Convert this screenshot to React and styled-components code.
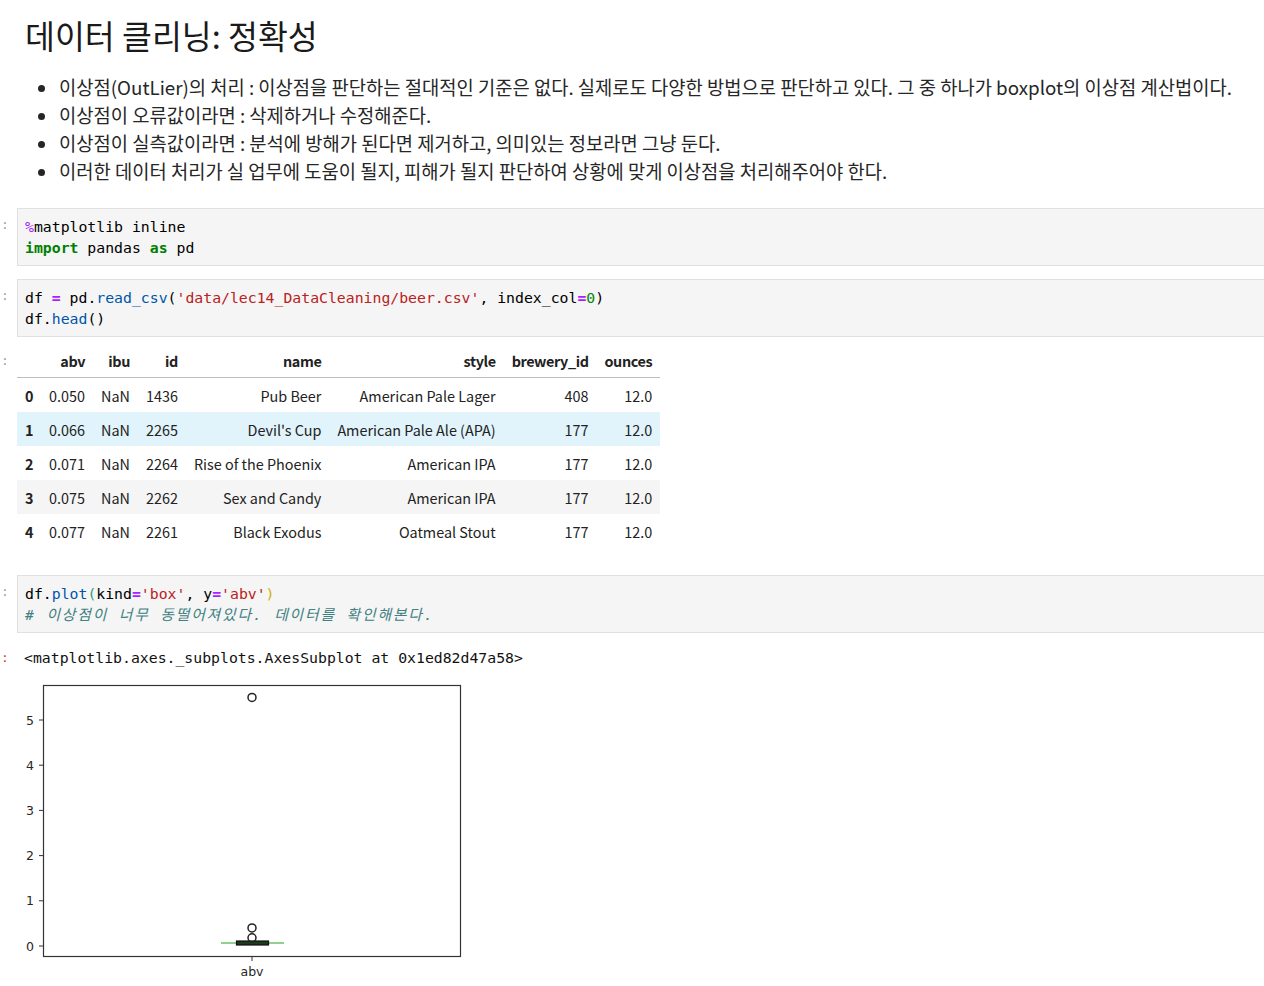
import React from "react";
import styled, { createGlobalStyle } from "styled-components";

const Global = createGlobalStyle`
  html, body { margin: 0; padding: 0; background: #fff; overflow: hidden; }
  body { font-family: "Noto Sans CJK KR", "Noto Sans", sans-serif; color: #212121; }
`;

const Notebook = styled.div`
  width: 1290px;
  padding-top: 10px;
`;

const Cell = styled.div`
  display: grid;
  grid-template-columns: 17px 1fr;
  margin-top: ${(p) => p.$mt || 0}px;
`;

const Prompt = styled.div`
  font-family: "DejaVu Sans Mono", monospace;
  font-size: 13px;
  line-height: 21px;
  padding-top: ${(p) => p.$pt || 0}px;
  color: ${(p) => (p.$out ? "#d84315" : "#9e9e9e")};
  text-align: left;
  padding-left: 1px;
`;

const Markdown = styled.div`
  padding: 0 8px;
`;

const Heading = styled.h1`
  margin: 0;
  font-size: 32.5px;
  font-weight: 400;
  line-height: 50px;
  color: #1a1a1a;
`;

const List = styled.ul`
  margin: 13px 0 0;
  padding-left: 34px;
  font-size: 18.75px;
  line-height: 28px;
  color: #262626;
`;

const Item = styled.li``;

const CodeBox = styled.pre`
  margin: 0;
  background: #f5f5f5;
  border: 1px solid #e0e0e0;
  padding: 7px 7px;
  font-family: "DejaVu Sans Mono", "Noto Sans CJK KR", monospace;
  font-size: 14.8px;
  line-height: 21px;
  color: #000;
  white-space: pre;
`;

const Tok = styled.span`
  color: ${(p) => p.$c};
  font-weight: ${(p) => (p.$b ? 700 : 400)};
  font-style: ${(p) => (p.$i ? "italic" : "normal")};
  letter-spacing: ${(p) => p.$ls || 0}px;
`;

const OutText = styled.pre`
  margin: 0;
  padding: 0 7px;
  font-family: "DejaVu Sans Mono", monospace;
  font-size: 14.8px;
  line-height: 21px;
  color: #111;
`;

const Table = styled.table`
  border-collapse: collapse;
  font-family: "Noto Sans CJK KR", "Noto Sans", sans-serif;
  font-size: 14.4px;
  color: #222;
  margin-top: 6px;
`;

const Th = styled.th`
  text-align: right;
  font-weight: 700;
  padding: 0 8px;
  height: 34px;
  white-space: nowrap;
  letter-spacing: -0.4px;
`;

const HeadRow = styled.tr`
  border-bottom: 1px solid #bdbdbd;
`;

const Row = styled.tr`
  background: ${(p) => p.$bg || "transparent"};
`;

const Td = styled.td`
  text-align: right;
  padding: 0 8px;
  height: 34px;
  white-space: nowrap;
`;

const PlotWrap = styled.div`
  margin-top: 12px;
`;

const KW = "#008000";
const OP = "#aa22ff";
const STR = "#ba2121";
const PROP = "#0055aa";
const NUM = "#008800";
const CMT = "#408080";

const rows = [
  ["0", "0.050", "NaN", "1436", "Pub Beer", "American Pale Lager", "408", "12.0"],
  ["1", "0.066", "NaN", "2265", "Devil's Cup", "American Pale Ale (APA)", "177", "12.0"],
  ["2", "0.071", "NaN", "2264", "Rise of the Phoenix", "American IPA", "177", "12.0"],
  ["3", "0.075", "NaN", "2262", "Sex and Candy", "American IPA", "177", "12.0"],
  ["4", "0.077", "NaN", "2261", "Black Exodus", "Oatmeal Stout", "177", "12.0"],
];
const rowBg = [null, "#e1f3fb", null, "#f5f5f5", null];

function BoxPlot() {
  const y = (v) => 266 - 45.2 * v;
  const ticks = [0, 1, 2, 3, 4, 5];
  return (
    <svg width="460" height="300" viewBox="0 0 460 300">
      <rect x="26.5" y="5.5" width="417" height="271" fill="#fff" stroke="#333" strokeWidth="1.2" />
      {ticks.map((t) => (
        <g key={t}>
          <line x1="22" x2="26.5" y1={y(t)} y2={y(t)} stroke="#333" strokeWidth="1" />
          <text x="17" y={y(t) + 4.5} textAnchor="end" fontFamily="DejaVu Sans, sans-serif" fontSize="12.5" fill="#262626">
            {t}
          </text>
        </g>
      ))}
      <line x1="204" x2="267" y1="263" y2="263" stroke="#6cc06a" strokeWidth="1.4" />
      <rect x="219.5" y="261" width="32" height="4" fill="#1e3a1e" stroke="#111" strokeWidth="1.2" />
      <circle cx="235" cy={y(5.5)} r="4" fill="none" stroke="#222" strokeWidth="1.5" />
      <circle cx="235" cy={y(0.4)} r="4" fill="none" stroke="#222" strokeWidth="1.5" />
      <circle cx="235" cy={y(0.18)} r="4" fill="none" stroke="#222" strokeWidth="1.5" />
      <line x1="235" x2="235" y1="276.5" y2="281" stroke="#333" strokeWidth="1" />
      <text x="235" y="296" textAnchor="middle" fontFamily="DejaVu Sans, sans-serif" fontSize="12.5" fill="#262626">
        abv
      </text>
    </svg>
  );
}

export default function App() {
  return (
    <>
      <Global />
      <Notebook>
        <Cell>
          <Prompt />
          <Markdown>
            <Heading>데이터 클리닝: 정확성</Heading>
            <List>
              <Item>이상점(OutLier)의 처리 : 이상점을 판단하는 절대적인 기준은 없다. 실제로도 다양한 방법으로 판단하고 있다. 그 중 하나가 boxplot의 이상점 계산법이다.</Item>
              <Item>이상점이 오류값이라면 : 삭제하거나 수정해준다.</Item>
              <Item>이상점이 실측값이라면 : 분석에 방해가 된다면 제거하고, 의미있는 정보라면 그냥 둔다.</Item>
              <Item>이러한 데이터 처리가 실 업무에 도움이 될지, 피해가 될지 판단하여 상황에 맞게 이상점을 처리해주어야 한다.</Item>
            </List>
          </Markdown>
        </Cell>

        <Cell $mt={23}>
          <Prompt $pt={6}>:</Prompt>
          <CodeBox>
            <Tok $c={OP}>%</Tok>matplotlib inline{"\n"}
            <Tok $c={KW} $b>import</Tok> pandas <Tok $c={KW} $b>as</Tok> pd
          </CodeBox>
        </Cell>

        <Cell $mt={13}>
          <Prompt $pt={6}>:</Prompt>
          <CodeBox>
            df <Tok $c={OP} $b>=</Tok> pd.<Tok $c={PROP}>read_csv</Tok>(<Tok $c={STR}>'data/lec14_DataCleaning/beer.csv'</Tok>, index_col<Tok $c={OP} $b>=</Tok><Tok $c={NUM}>0</Tok>){"\n"}
            df.<Tok $c={PROP}>head</Tok>()
          </CodeBox>
        </Cell>

        <Cell>
          <Prompt $pt={13}>:</Prompt>
          <div>
            <Table>
              <thead>
                <HeadRow>
                  <Th></Th>
                  <Th>abv</Th>
                  <Th>ibu</Th>
                  <Th>id</Th>
                  <Th>name</Th>
                  <Th>style</Th>
                  <Th>brewery_id</Th>
                  <Th>ounces</Th>
                </HeadRow>
              </thead>
              <tbody>
                {rows.map((r, i) => (
                  <Row key={i} $bg={rowBg[i]}>
                    <Th>{r[0]}</Th>
                    {r.slice(1).map((c, j) => (
                      <Td key={j}>{c}</Td>
                    ))}
                  </Row>
                ))}
              </tbody>
            </Table>
          </div>
        </Cell>

        <Cell $mt={27}>
          <Prompt $pt={6}>:</Prompt>
          <CodeBox>
            df.<Tok $c={PROP}>plot</Tok><Tok $c="#1fa37b">(</Tok>kind<Tok $c={OP} $b>=</Tok><Tok $c={STR}>'box'</Tok>, y<Tok $c={OP} $b>=</Tok><Tok $c={STR}>'abv'</Tok><Tok $c="#c9b400">)</Tok>{"\n"}
            <Tok $c={CMT} $i $ls={1.8}># 이상점이 너무 동떨어져있다. 데이터를 확인해본다.</Tok>
          </CodeBox>
        </Cell>

        <Cell $mt={14}>
          <Prompt $out>:</Prompt>
          <div>
            <OutText>&lt;matplotlib.axes._subplots.AxesSubplot at 0x1ed82d47a58&gt;</OutText>
            <PlotWrap>
              <BoxPlot />
            </PlotWrap>
          </div>
        </Cell>
      </Notebook>
    </>
  );
}
